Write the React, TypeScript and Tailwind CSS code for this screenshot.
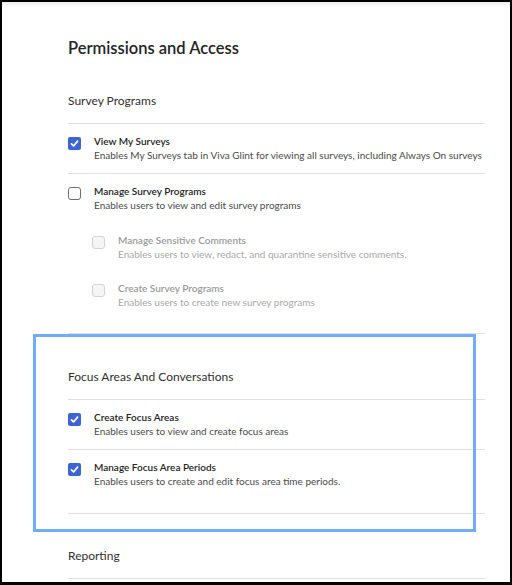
import type { ReactNode } from 'react'

type CheckState = 'checked' | 'empty' | 'disabled'

function Checkbox({ state }: { state: CheckState }) {
  if (state === 'checked') {
    return (
      <span className="flex w-[13px] h-[13px] shrink-0 items-center justify-center rounded-[2px] bg-[#3d63d6]">
        <svg width="9" height="9" viewBox="0 0 10 10" fill="none">
          <path d="M1.6 5.4 L4 7.7 L8.4 2.4" stroke="white" strokeWidth="1.9" strokeLinecap="round" strokeLinejoin="round" />
        </svg>
      </span>
    )
  }
  if (state === 'disabled') {
    return <span className="block w-[13px] h-[13px] shrink-0 rounded-[3px] border border-[#d4d4d4] bg-[#f5f5f5]" />
  }
  return <span className="block w-[13px] h-[13px] shrink-0 rounded-[3px] border border-[#6e6e6e] bg-white" />
}

function Option({
  state,
  title,
  desc,
}: {
  state: CheckState
  title: string
  desc: string
}) {
  const off = state === 'disabled'
  return (
    <div className="flex gap-[13px]">
      <div className="pt-[3px]">
        <Checkbox state={state} />
      </div>
      <div>
        <div className={`text-[10px] leading-[14px] font-semibold ${off ? 'text-[#9a9a9a]' : 'text-[#242424]'}`}>
          {title}
        </div>
        <div className={`text-[10px] leading-[15px] whitespace-nowrap ${off ? 'text-[#a8a8a8]' : 'text-[#4a4a4a]'}`}>
          {desc}
        </div>
      </div>
    </div>
  )
}

function SectionHead({ children }: { children: ReactNode }) {
  return (
    <div className="border-b border-[#e0e0e0] pb-[12px] text-[12px] leading-[20px] text-[#303030]">
      {children}
    </div>
  )
}

export default function App() {
  return (
    <div
      className="w-[512px] h-[585px] overflow-hidden bg-black pt-[2px] pl-[2px] pr-[2px] pb-[3px]"
      style={{ fontFamily: 'Lato, "Open Sans", sans-serif' }}
    >
      <div className="relative h-full bg-white pl-[66px] pr-[25px]">
        {/* faint top shadow */}
        <div className="absolute left-0 right-0 top-0 h-[5px] bg-gradient-to-b from-[#ececec] to-white" />

        <h1 className="pt-[34px] text-[16.5px] leading-[24px] font-semibold text-[#242424]">
          Permissions and Access
        </h1>

        {/* Survey Programs */}
        <div className="pt-[31px]">
          <SectionHead>Survey Programs</SectionHead>
        </div>

        <div className="border-b border-[#e0e0e0] pt-[10px] pb-[10px]">
          <Option
            state="checked"
            title="View My Surveys"
            desc="Enables My Surveys tab in Viva Glint for viewing all surveys, including Always On surveys"
          />
        </div>

        <div className="border-b border-[#e0e0e0] pt-[10px] pb-[23px]">
          <Option
            state="empty"
            title="Manage Survey Programs"
            desc="Enables users to view and edit survey programs"
          />
          <div className="pl-[24px] mt-[20px] flex flex-col gap-[19px]">
            <Option
              state="disabled"
              title="Manage Sensitive Comments"
              desc="Enables users to view, redact, and quarantine sensitive comments."
            />
            <Option
              state="disabled"
              title="Create Survey Programs"
              desc="Enables users to create new survey programs"
            />
          </div>
        </div>

        {/* Focus Areas And Conversations */}
        <div className="relative pt-[33px]">
          <div className="pointer-events-none absolute left-[-35px] right-[9px] top-0 h-[198px] border-[3px] border-[#70adf8]" />
          <SectionHead>Focus Areas And Conversations</SectionHead>

          <div className="border-b border-[#e0e0e0] pt-[10px] pb-[10px]">
            <Option
              state="checked"
              title="Create Focus Areas"
              desc="Enables users to view and create focus areas"
            />
          </div>

          <div className="border-b border-[#e0e0e0] pt-[10px] pb-[24px]">
            <Option
              state="checked"
              title="Manage Focus Area Periods"
              desc="Enables users to create and edit focus area time periods."
            />
          </div>
        </div>

        {/* Reporting */}
        <div className="pt-[32px]">
          <SectionHead>Reporting</SectionHead>
        </div>
      </div>
    </div>
  )
}
